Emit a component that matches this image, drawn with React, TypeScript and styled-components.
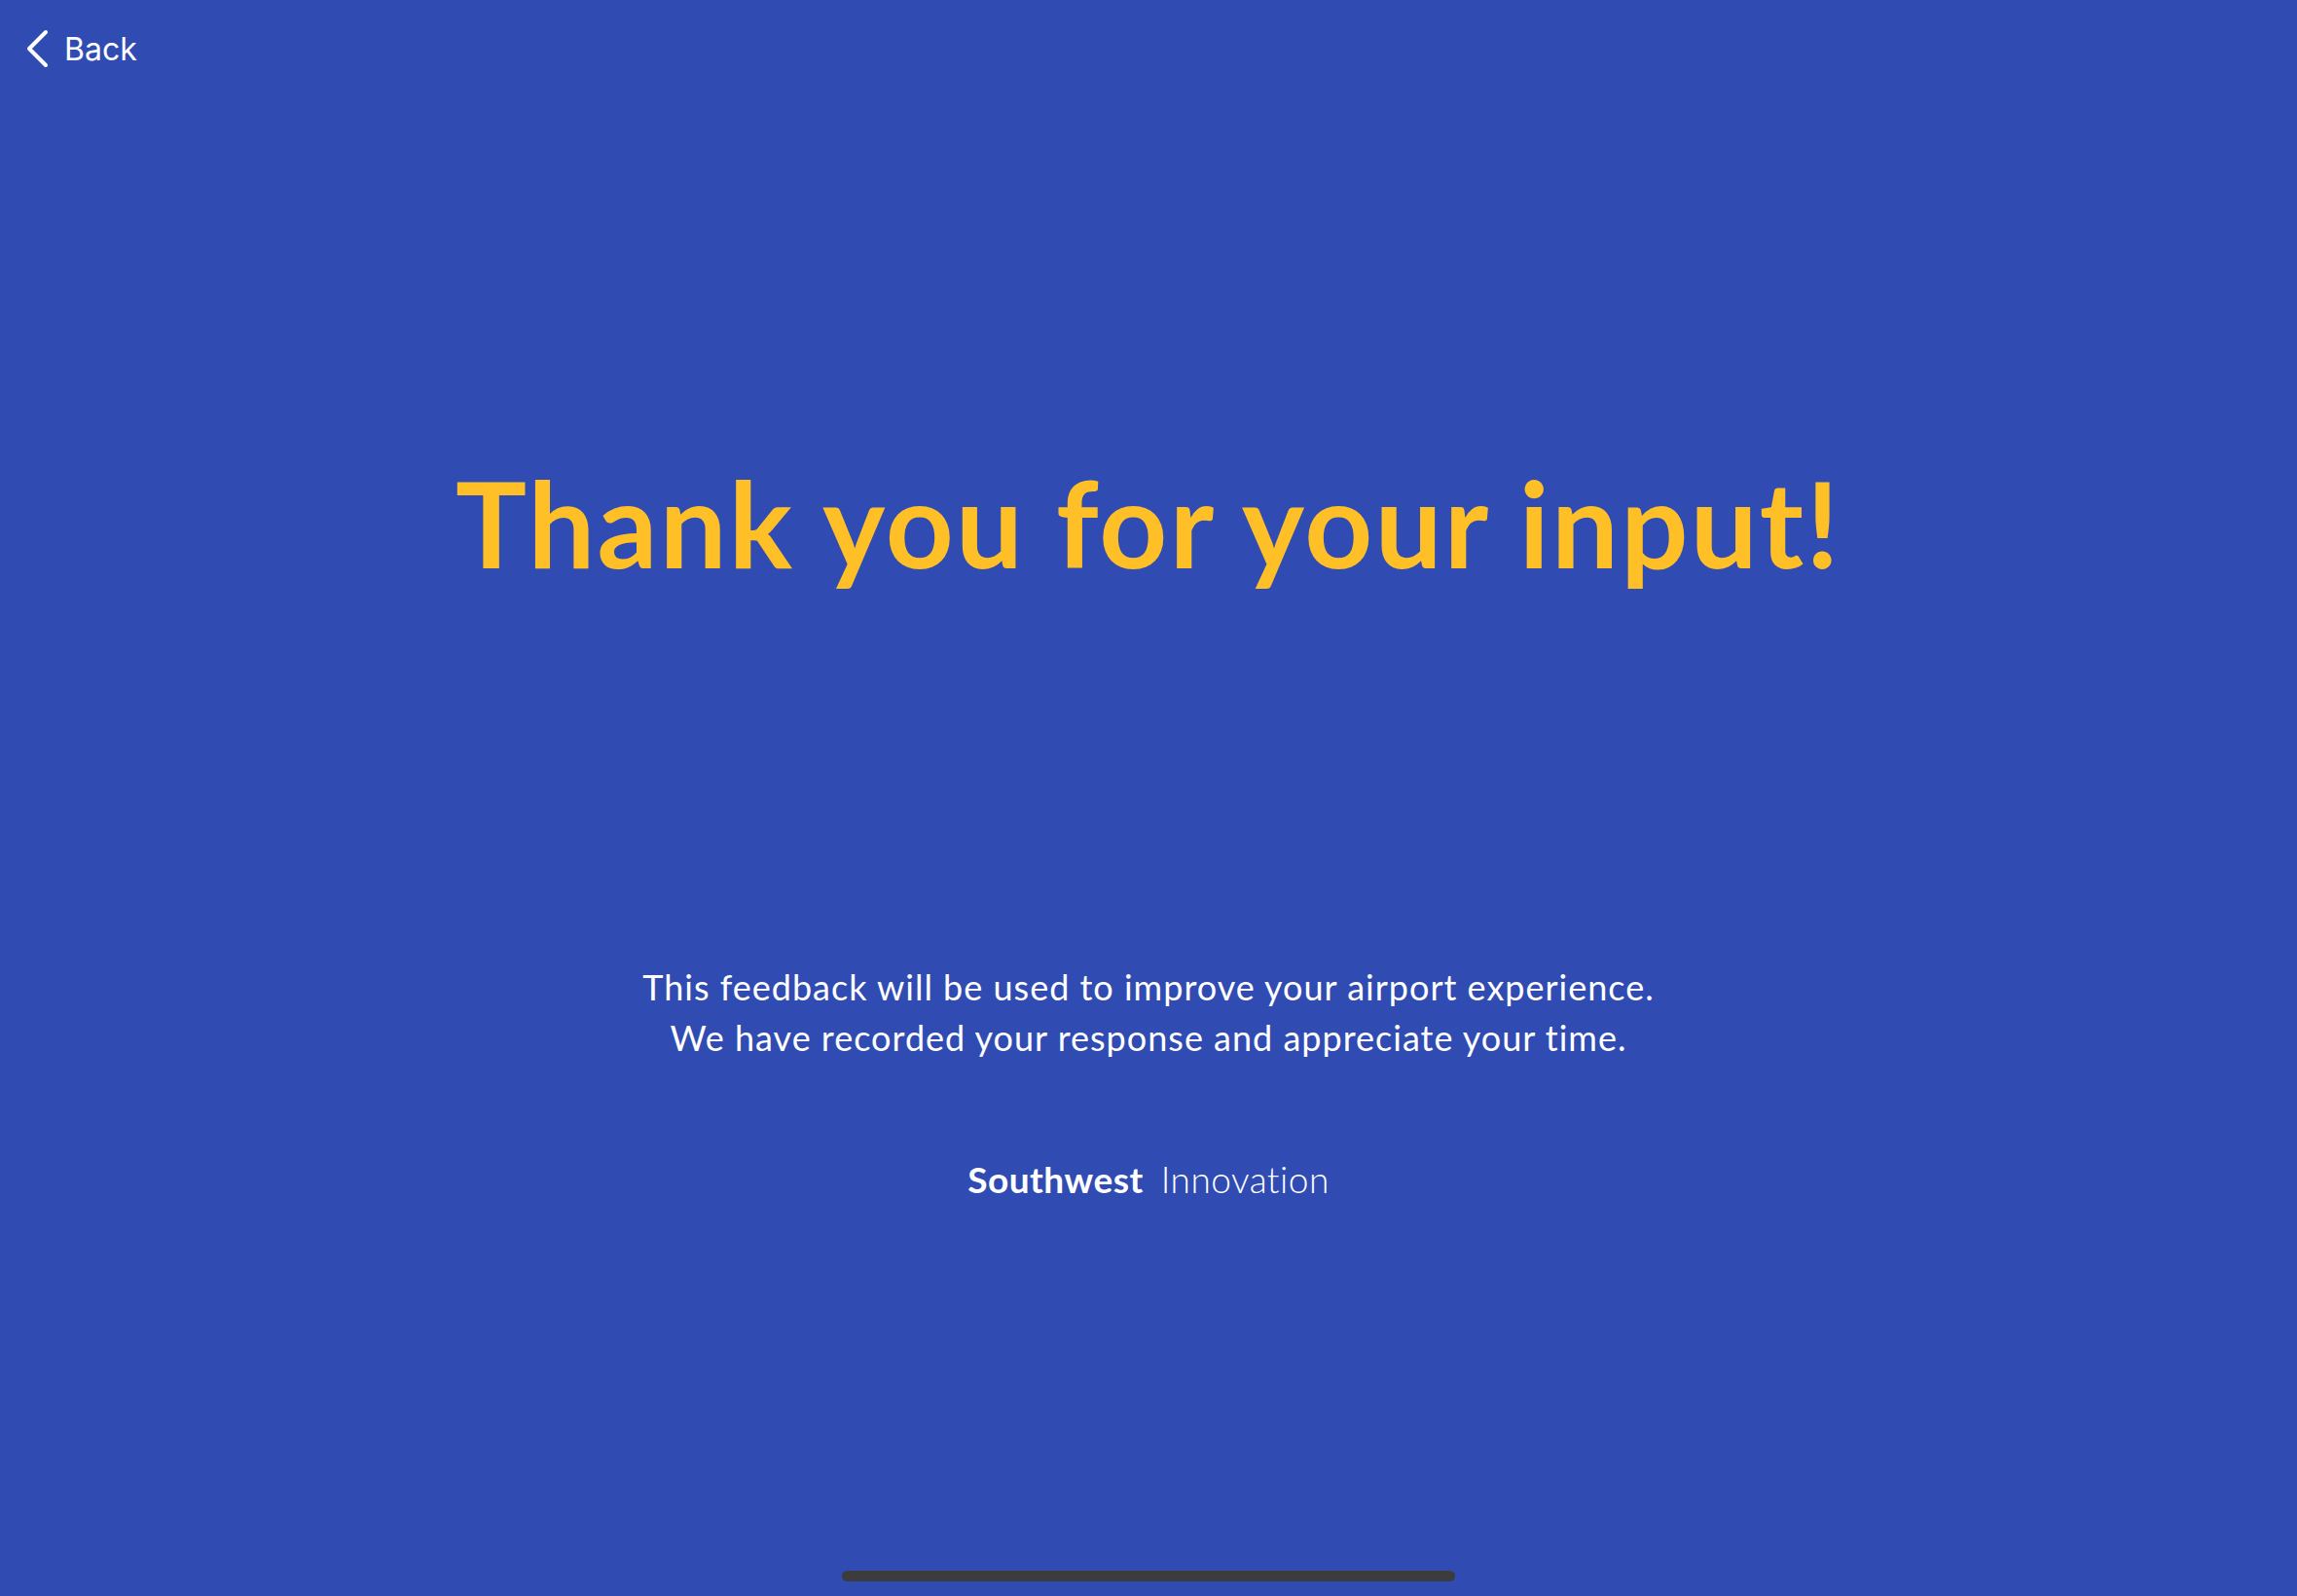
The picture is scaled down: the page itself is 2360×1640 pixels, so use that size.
import React from "react";
import styled, { createGlobalStyle } from "styled-components";

const GlobalStyle = createGlobalStyle`
  html, body { margin: 0; padding: 0; background: #304cb2; }
  body { font-family: "Lato", "Open Sans", sans-serif; }
`;

const Page = styled.div`
  min-height: 100vh;
  height: 1640px;
  box-sizing: border-box;
  background: #304cb2;
  display: flex;
  flex-direction: column;
  align-items: center;
  overflow: hidden;
`;

const TopBar = styled.div`
  align-self: stretch;
  display: flex;
  align-items: center;
  padding: 29px 0 0 26px;
  height: 42px;
`;

const BackButton = styled.button`
  display: flex;
  align-items: center;
  gap: 16px;
  background: none;
  border: none;
  padding: 0;
  color: #ffffff;
  font-family: "Inter", "Liberation Sans", sans-serif;
  font-size: 32px;
  font-weight: 400;
  cursor: pointer;
`;

const Title = styled.h1`
  margin: 401px 0 0;
  color: #ffbf27;
  font-family: "Lato", sans-serif;
  font-weight: 700;
  font-size: 122px;
  line-height: 130px;
  letter-spacing: 2.25px;
  white-space: nowrap;
`;

const Message = styled.p`
  margin: 386px 0 0;
  color: #ffffff;
  font-family: "Lato", sans-serif;
  font-size: 36px;
  font-weight: 400;
  line-height: 52px;
  letter-spacing: 1px;
  text-align: center;
`;

const Brand = styled.div`
  margin-top: 97px;
  display: flex;
  align-items: baseline;
  gap: 18px;
  color: #ffffff;
  font-family: "Lato", sans-serif;
  font-size: 37px;
  letter-spacing: 0.5px;
`;

const BrandName = styled.span<{ $weight: number }>`
  font-weight: ${(p) => p.$weight};
`;

const Spacer = styled.div`
  flex: 1;
`;

const HomeIndicator = styled.div`
  width: 630px;
  height: 11px;
  border-radius: 6px;
  background: #3c3c3c;
  margin-bottom: 15px;
`;

export default function App() {
  return (
    <>
      <GlobalStyle />
      <Page>
        <TopBar>
          <BackButton>
            <svg width="24" height="40" viewBox="0 0 24 40" fill="none">
              <path
                d="M21 3 L4 20 L21 37"
                stroke="#ffffff"
                strokeWidth="4"
                strokeLinecap="round"
                strokeLinejoin="round"
              />
            </svg>
            Back
          </BackButton>
        </TopBar>
        <Title>Thank you for your input!</Title>
        <Message>
          This feedback will be used to improve your airport experience.
          <br />
          We have recorded your response and appreciate your time.
        </Message>
        <Brand>
          <BrandName $weight={700}>Southwest</BrandName>
          <BrandName $weight={300}>Innovation</BrandName>
        </Brand>
        <Spacer />
        <HomeIndicator />
      </Page>
    </>
  );
}
